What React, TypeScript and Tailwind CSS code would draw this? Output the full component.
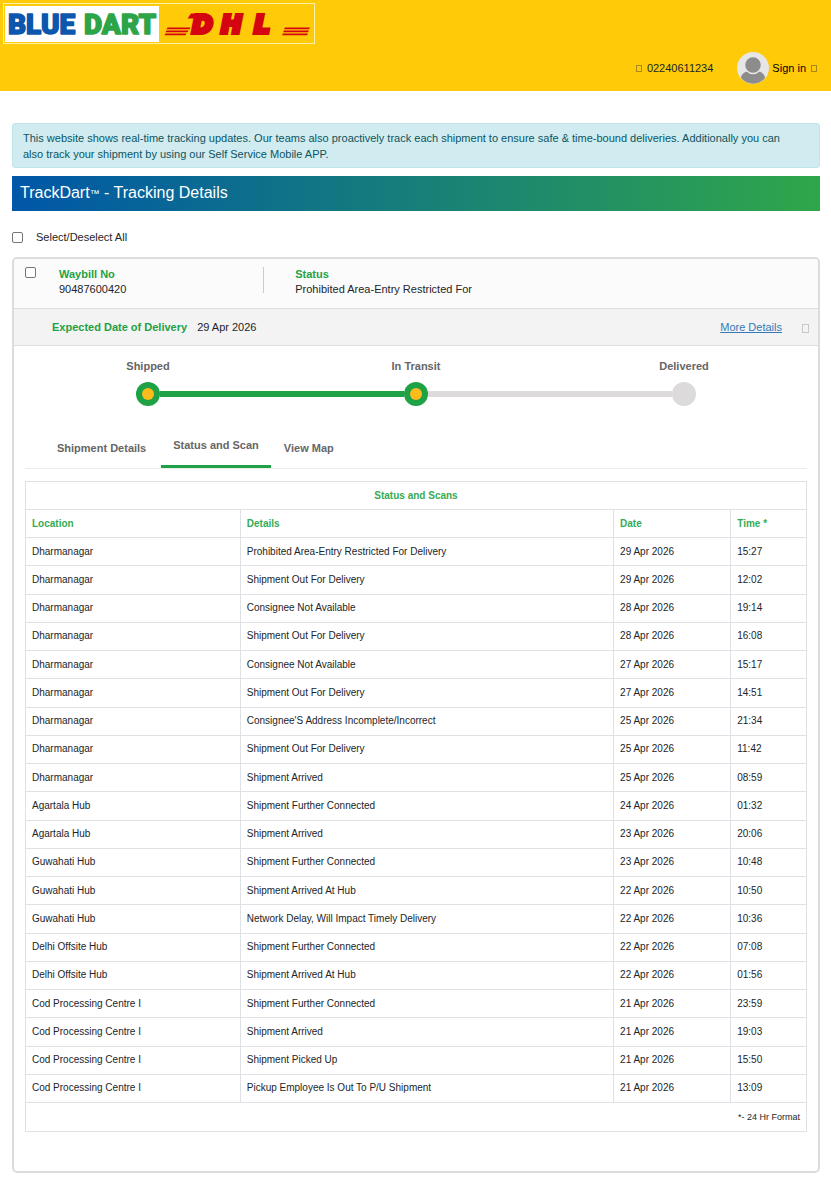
import React from "react";

type Scan = [location: string, details: string, date: string, time: string];

const scans: Scan[] = [
  ["Dharmanagar", "Prohibited Area-Entry Restricted For Delivery", "29 Apr 2026", "15:27"],
  ["Dharmanagar", "Shipment Out For Delivery", "29 Apr 2026", "12:02"],
  ["Dharmanagar", "Consignee Not Available", "28 Apr 2026", "19:14"],
  ["Dharmanagar", "Shipment Out For Delivery", "28 Apr 2026", "16:08"],
  ["Dharmanagar", "Consignee Not Available", "27 Apr 2026", "15:17"],
  ["Dharmanagar", "Shipment Out For Delivery", "27 Apr 2026", "14:51"],
  ["Dharmanagar", "Consignee'S Address Incomplete/Incorrect", "25 Apr 2026", "21:34"],
  ["Dharmanagar", "Shipment Out For Delivery", "25 Apr 2026", "11:42"],
  ["Dharmanagar", "Shipment Arrived", "25 Apr 2026", "08:59"],
  ["Agartala Hub", "Shipment Further Connected", "24 Apr 2026", "01:32"],
  ["Agartala Hub", "Shipment Arrived", "23 Apr 2026", "20:06"],
  ["Guwahati Hub", "Shipment Further Connected", "23 Apr 2026", "10:48"],
  ["Guwahati Hub", "Shipment Arrived At Hub", "22 Apr 2026", "10:50"],
  ["Guwahati Hub", "Network Delay, Will Impact Timely Delivery", "22 Apr 2026", "10:36"],
  ["Delhi Offsite Hub", "Shipment Further Connected", "22 Apr 2026", "07:08"],
  ["Delhi Offsite Hub", "Shipment Arrived At Hub", "22 Apr 2026", "01:56"],
  ["Cod Processing Centre I", "Shipment Further Connected", "21 Apr 2026", "23:59"],
  ["Cod Processing Centre I", "Shipment Arrived", "21 Apr 2026", "19:03"],
  ["Cod Processing Centre I", "Shipment Picked Up", "21 Apr 2026", "15:50"],
  ["Cod Processing Centre I", "Pickup Employee Is Out To P/U Shipment", "21 Apr 2026", "13:09"],
];

const steps = [
  { label: "Shipped", before: "bg-transparent", after: "bg-[#1fa145]", reached: true },
  { label: "In Transit", before: "bg-[#1fa145]", after: "bg-[#dcdadb]", reached: true },
  { label: "Delivered", before: "bg-[#dcdadb]", after: "bg-transparent", reached: false },
];

function Logo() {
  return (
    <svg viewBox="0 0 312 41" className="h-[41px] w-[312px]" role="img" aria-label="Blue Dart DHL">
      <rect x="0.5" y="0.5" width="311" height="40" fill="none" stroke="#fff0a8" />
      <rect x="2" y="3" width="154" height="36" fill="#fff" />
      <g fontFamily="Roboto, sans-serif" fontWeight="900" fontSize="28" strokeWidth="1.500" strokeLinejoin="round">
        <text x="5" y="31" fill="#0a57ad" stroke="#0a57ad">BLUE</text>
        <text x="81" y="31" fill="#2ea449" stroke="#2ea449">DART</text>
      </g>
      <g fill="#d40511">
        <path d="M164.500 24.500h23l-1 1.700h-23zM163.500 27.500h22l-1 1.700h-22zM162.500 30.500h21l-1 1.700h-21z" />
        <path d="M282 24.500h25l-1 1.700h-25zM281 27.500h25l-1 1.700h-25zM280 30.500h25l-1 1.700h-25z" />
        <path d="M188 10.500h16l-3.500 5h-16z" />
        <text
          x="189 218 251"
          y="30"
          fontFamily="'DejaVu Sans', sans-serif"
          fontWeight="700"
          fontStyle="italic"
          fontSize="25"
          stroke="#d40511"
          strokeWidth="4"
        >
          DHL
        </text>
      </g>
    </svg>
  );
}

function Avatar() {
  return (
    <svg viewBox="0 0 32 32" className="size-8" aria-hidden="true">
      <circle cx="16" cy="16" r="16" fill="#e6e6e6" />
      <path d="M4 26c.5-4 3.500-6.500 8-7h8c4.500.5 7.500 3 8 7A15.500 15.500 0 0 1 4 26z" fill="#8c8c8c" />
      <circle cx="16" cy="13" r="8.500" fill="#8c8c8c" stroke="#e6e6e6" strokeWidth="1.500" />
    </svg>
  );
}

function Step({ label, before, after, reached }: (typeof steps)[number]) {
  return (
    <li className="flex flex-col gap-2">
      <span className="text-center font-bold text-[#666]">{label}</span>
      <span className="flex items-center">
        <span className={`h-[6px] flex-1 ${before}`} />
        <span
          className={`flex size-6 items-center justify-center rounded-full ${reached ? "bg-[#1fa145]" : "bg-[#dcdadb]"}`}
        >
          {reached && <span className="size-3 rounded-full bg-[#fbbc1c]" />}
        </span>
        <span className={`h-[6px] flex-1 ${after}`} />
      </span>
    </li>
  );
}

const box = "appearance-none rounded-[2px] border border-[#767676] bg-white size-[11px] checked:bg-[#1fa145]";
const cell = "border border-[#dee2e6] px-[6px] align-middle text-left";
const head = `${cell} font-bold text-[#35ab55]`;

export default function App() {
  return (
    <div className="min-h-screen bg-white pb-7 font-['Liberation_Sans',Arial,sans-serif] text-[11px] leading-4 text-[#212529]">
      <header className="flex h-[91px] flex-col justify-between bg-[#ffcb08] p-[3px]">
        <a href="#home" className="w-fit">
          <Logo />
        </a>
        <div className="flex items-center justify-end pr-[11px] pb-1">
          <a href="tel:02240611234" className="flex items-center gap-[5px]">
            <span className="h-[7px] w-[6px] border border-[#a88a1c]" />
            02240611234
          </a>
          <button type="button" className="ml-6 flex items-center gap-[3px] text-black">
            <Avatar />
            Sign in
            <span className="ml-[2px] h-[7px] w-[6px] border border-[#a88a1c]" />
          </button>
        </div>
      </header>

      <main className="pt-8 pr-[11px] pl-3">
        <p className="rounded-[3px] border border-[#bee5eb] bg-[#d1ecf1] pt-[6px] pr-6 pb-[5px] pl-[10px] text-[#0c5460]">
          This website shows real-time tracking updates. Our teams also proactively track each shipment to ensure safe
          &amp; time-bound deliveries. Additionally you can also track your shipment by using our Self Service Mobile
          APP.
        </p>

        <h1 className="mt-2 flex h-[35px] items-center bg-linear-to-r/srgb from-[#0057a8] to-[#30a64a] px-2 text-[16px] text-white">
          <span>
            TrackDart<span className="align-middle text-[10px]">™</span> - Tracking Details
          </span>
        </h1>

        <label className="mt-[18px] flex items-center gap-[13px]">
          <input type="checkbox" className={box} />
          Select/Deselect All
        </label>

        <section className="mt-3 rounded-[5px] border-2 border-[#dcdcdc] pb-[39px]">
          <div className="flex h-[49px] items-start rounded-t-[3px] bg-[#fbfbfb] pt-[8px] pl-[11px]">
            <input type="checkbox" aria-label="Select waybill 90487600420" className={box} />
            <div className="ml-[23px] flex w-[25%] flex-col leading-[15px]">
              <span className="font-bold text-[#1fa145]">Waybill No</span>
              <span>90487600420</span>
            </div>
            <div className="ml-[6px] h-[26px] w-px bg-[#ccc]" />
            <div className="ml-[31px] flex flex-col leading-[15px]">
              <span className="font-bold text-[#1fa145]">Status</span>
              <span>Prohibited Area-Entry Restricted For</span>
            </div>
          </div>

          <div className="flex h-[38px] items-center border-y border-[#dedede] bg-[#f3f3f3] pr-[9px] pl-[38px]">
            <span className="font-bold text-[#1fa145]">Expected Date of Delivery</span>
            <span className="ml-[10px]">29 Apr 2026</span>
            <a href="#details" className="ml-auto text-[#337ab7] underline">
              More Details
            </a>
            <span className="mt-[2px] ml-5 h-[9px] w-[7px] border border-[#c8c8c8]" />
          </div>

          <ol className="grid grid-cols-3 pt-3">
            {steps.map((step) => (
              <Step key={step.label} {...step} />
            ))}
          </ol>

          <div className="px-[11px]">
            <div
              role="tablist"
              className="mt-[28px] flex h-[35px] items-stretch border-b border-[#ececec] pl-[18px] font-bold text-[#666]"
            >
              <button type="button" role="tab" aria-selected="false" className="pr-[15px] pb-[6px] pl-[14px]">
                Shipment Details
              </button>
              <button
                type="button"
                role="tab"
                aria-selected="true"
                className="border-b-[3px] border-[#1fa145] px-3 pb-[10px]"
              >
                Status and Scan
              </button>
              <button type="button" role="tab" aria-selected="false" className="px-[13px] pb-[6px]">
                View Map
              </button>
            </div>

            <table className="mt-3 h-[651px] w-full table-fixed border-collapse text-[10px]">
              <colgroup>
                <col className="w-[27.5%]" />
                <col className="w-[47.8%]" />
                <col className="w-[15%]" />
                <col />
              </colgroup>
              <thead>
                <tr className="h-7">
                  <th colSpan={4} className="border border-[#dee2e6] text-center font-bold text-[#35ab55]">
                    Status and Scans
                  </th>
                </tr>
                <tr className="h-7">
                  <th className={head}>Location</th>
                  <th className={head}>Details</th>
                  <th className={head}>Date</th>
                  <th className={head}>Time *</th>
                </tr>
              </thead>
              <tbody>
                {scans.map(([location, details, date, time]) => (
                  <tr key={`${date} ${time}`} className="h-7">
                    <td className={cell}>{location}</td>
                    <td className={cell}>{details}</td>
                    <td className={cell}>{date}</td>
                    <td className={cell}>{time}</td>
                  </tr>
                ))}
              </tbody>
              <tfoot>
                <tr className="h-[29px]">
                  <td colSpan={4} className="border border-[#dee2e6] px-[6px] text-right text-[9px]">
                    *- 24 Hr Format
                  </td>
                </tr>
              </tfoot>
            </table>
          </div>
        </section>
      </main>
    </div>
  );
}
